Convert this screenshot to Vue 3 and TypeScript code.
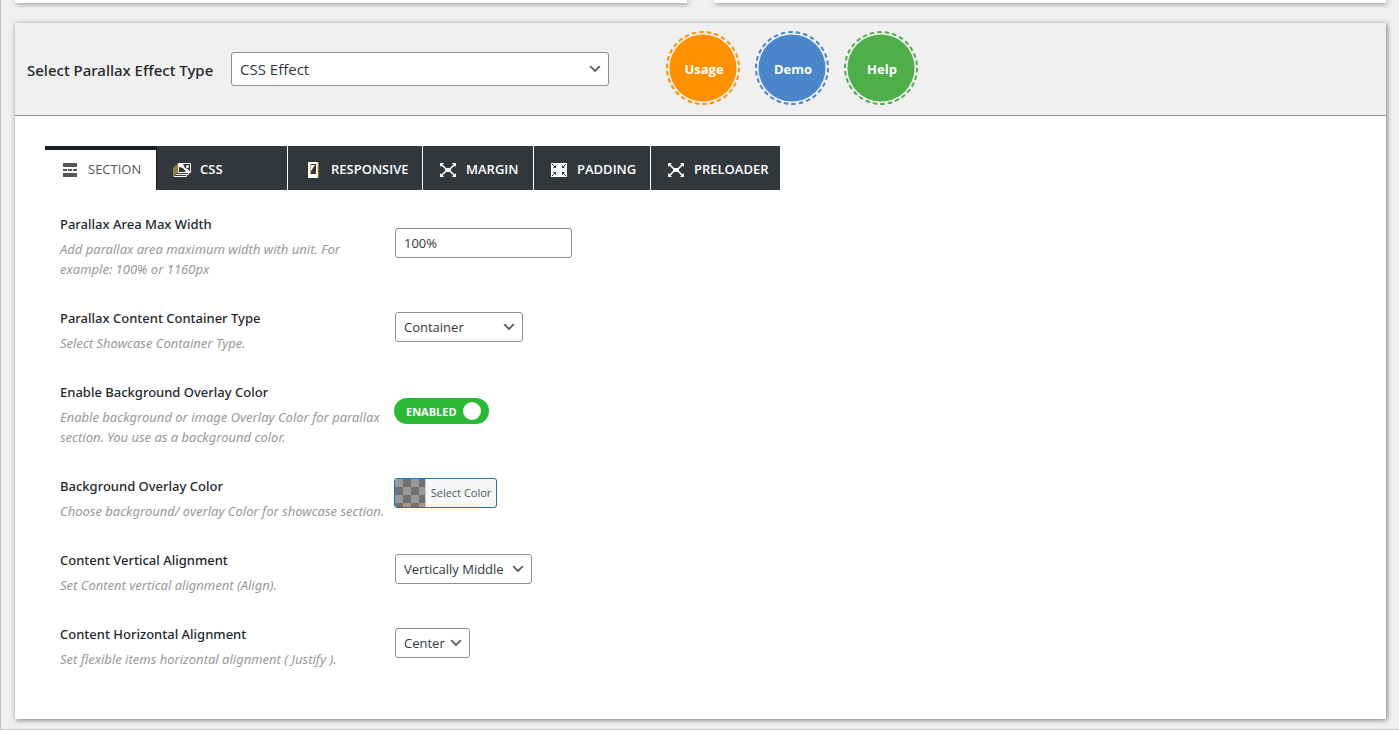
<script setup lang="ts">
import { ref } from 'vue'

interface Field {
  id: string
  title: string
  hint: string
  kind: 'text' | 'select' | 'toggle' | 'color'
  options?: string[]
  size?: string
}

const tabs = [
  { name: 'SECTION', icon: 'section' },
  { name: 'CSS', icon: 'images' },
  { name: 'RESPONSIVE', icon: 'phone' },
  { name: 'MARGIN', icon: 'expand' },
  { name: 'PADDING', icon: 'contract' },
  { name: 'PRELOADER', icon: 'expand' },
]
const active = ref('SECTION')
const effects = ['CSS Effect', 'Image Effect', 'Video Effect']
const effect = ref('CSS Effect')
const badges = [
  { text: 'Usage', tone: 'orange' },
  { text: 'Demo', tone: 'blue' },
  { text: 'Help', tone: 'green' },
]

const fields: Field[] = [
  { id: 'max-width', title: 'Parallax Area Max Width', hint: 'Add parallax area maximum width with unit. For example: 100% or 1160px', kind: 'text' },
  { id: 'container', title: 'Parallax Content Container Type', hint: 'Select Showcase Container Type.', kind: 'select', options: ['Container', 'Full Width'], size: 'medium' },
  { id: 'overlay', title: 'Enable Background Overlay Color', hint: 'Enable background or image Overlay Color for parallax section. You use as a background color.', kind: 'toggle' },
  { id: 'color', title: 'Background Overlay Color', hint: 'Choose background/ overlay Color for showcase section.', kind: 'color' },
  { id: 'vertical', title: 'Content Vertical Alignment', hint: 'Set Content vertical alignment (Align).', kind: 'select', options: ['Vertically Middle', 'Vertically Top'], size: 'large' },
  { id: 'horizontal', title: 'Content Horizontal Alignment', hint: 'Set flexible items horizontal alignment ( Justify ).', kind: 'select', options: ['Center', 'Left', 'Right'], size: 'small' },
]
const values = ref<Record<string, string>>({
  'max-width': '100%',
  container: 'Container',
  vertical: 'Vertically Middle',
  horizontal: 'Center',
})
const overlay = ref(true)
</script>

<template>
  <main class="page">
    <div class="previous">
      <div class="previous-card"></div>
      <div class="previous-card"></div>
    </div>

    <section class="card">
      <header class="head">
        <label class="head-label" for="effect">Select Parallax Effect Type</label>
        <span class="pick pick-wide">
          <select id="effect" v-model="effect">
            <option v-for="e in effects" :key="e">{{ e }}</option>
          </select>
          <svg class="chevron" viewBox="0 0 20 20"><path d="M5 6l5 5 5-5 2 1-7 7-7-7 2-1z" fill="#555" /></svg>
        </span>
        <nav class="badges">
          <a v-for="b in badges" :key="b.text" href="#" class="badge" :class="b.tone">
            <svg class="ring" viewBox="0 0 74 74">
              <circle cx="37" cy="37" r="36" fill="none" stroke="currentColor" stroke-width="2" pathLength="300" stroke-dasharray="6 4" />
              <circle cx="37" cy="37" r="33.500" fill="currentColor" />
            </svg>
            <span class="badge-text">{{ b.text }}</span>
          </a>
        </nav>
      </header>

      <div class="body">
        <div class="tabs" role="tablist">
          <button
            v-for="t in tabs"
            :key="t.name"
            type="button"
            role="tab"
            class="tab"
            :class="[{ active: active === t.name }, 'tab-' + t.name.toLowerCase()]"
            :aria-selected="active === t.name"
            @click="active = t.name"
          >
            <svg v-if="t.icon === 'section'" class="icon" viewBox="0 0 20 20" fill="currentColor">
              <path d="M3 3h14v4H3zM3 9h4v2H3zM8 9h4v2H8zM13 9h4v2h-4zM3 13h14v4H3z" />
            </svg>
            <svg v-else-if="t.icon === 'images'" class="icon" viewBox="0 0 20 20">
              <path d="M6.500 3.500h12v9h-12z" fill="none" stroke="#fff" />
              <path d="M4 14.500h12.500v-2M2 16.500h12.500v-2" fill="none" stroke="#fff" />
              <path d="M6 3v10M4 5v10M2 7v10" fill="none" stroke="#efc35c" />
              <path d="M7 4h4l2 4 3 1 2 3h-4l-3-4-4-1z" fill="#fff" />
              <circle cx="15.500" cy="6.500" r="1.500" fill="#fff" />
            </svg>
            <svg v-else-if="t.icon === 'phone'" class="icon" viewBox="0 0 20 20">
              <path fill="#fff" fill-rule="evenodd" d="M5 2h10v16H5zM7 4v10h6V4z" />
              <path fill="#fff" d="M8 5h4l-4 6z" />
              <path stroke="#e3b64c" d="M15 2v16M7.500 4v10" />
            </svg>
            <svg v-else-if="t.icon === 'expand'" class="icon" viewBox="0 0 20 20">
              <path fill="#fff" d="M7 8h6v4H7z" />
              <path fill="#fff" d="M2 3h4L2 7zM18 3h-4l4 4zM2 17h4l-4-4zM18 17h-4l4-4z" />
              <path stroke="#fff" stroke-width="1.600" d="M3 4l5 5M17 4l-5 5M3 16l5-5M17 16l-5-5" />
            </svg>
            <svg v-else class="icon" viewBox="0 0 20 20">
              <path fill="#fff" d="M2 3h16v14H2z" />
              <path fill="#32373c" d="M7 8V5L4 8zM13 8V5l3 3zM7 12v3l-3-3zM13 12v3l3-3z" />
              <path stroke="#32373c" d="M3 4l3 3M17 4l-3 3M3 16l3-3M17 16l-3-3" />
            </svg>
            <span class="tab-text">{{ t.name }}</span>
          </button>
        </div>

        <form class="fields" @submit.prevent>
          <div v-for="f in fields" :key="f.id" class="field">
            <div class="about">
              <label class="title" :for="f.id">{{ f.title }}</label>
              <p class="hint">{{ f.hint }}</p>
            </div>
            <div class="control">
              <input v-if="f.kind === 'text'" :id="f.id" v-model="values[f.id]" class="text" type="text" />
              <span v-else-if="f.kind === 'select'" class="pick" :class="'pick-' + f.size">
                <select :id="f.id" v-model="values[f.id]">
                  <option v-for="o in f.options" :key="o">{{ o }}</option>
                </select>
                <svg class="chevron" viewBox="0 0 20 20"><path d="M5 6l5 5 5-5 2 1-7 7-7-7 2-1z" fill="#555" /></svg>
              </span>
              <label v-else-if="f.kind === 'toggle'" class="toggle" :class="{ off: !overlay }">
                <input :id="f.id" v-model="overlay" type="checkbox" />
                <span>{{ overlay ? 'ENABLED' : 'DISABLED' }}</span>
                <i class="knob"></i>
              </label>
              <button v-else :id="f.id" type="button" class="color">
                <span class="swatch"></span>
                <span class="color-text">Select Color</span>
              </button>
            </div>
          </div>
        </form>
      </div>
    </section>
  </main>
</template>

<style>
body {
  margin: 0;
  background: #f0f0f1;
}
</style>

<style scoped>
* {
  box-sizing: border-box;
}
.page {
  min-height: 100vh;
  padding: 0 13px 10px 14px;
  border-left: 1px solid #c3c4c7;
  border-bottom: 1px solid #c3c4c7;
  background: #f0f0f0;
  color: #23282d;
  font-family: "Segoe UI", "Open Sans", "Noto Sans", sans-serif;
  font-size: 13px;
}
.previous {
  display: grid;
  grid-template-columns: 1fr 1fr;
  gap: 27px;
  margin-bottom: 20px;
}
.previous-card {
  height: 3px;
  background: #fff;
  box-shadow: 1px 1px 5px #777;
}
.card {
  background: #fff;
  box-shadow: 1px 1px 5px #777;
}
.head {
  display: flex;
  align-items: center;
  height: 93px;
  padding: 0 12px;
  border-bottom: 1px solid #8c8f94;
  background: #f0f0f0;
}
.head-label {
  width: 204px;
  padding-top: 2px;
  font-family: "Segoe UI", "Noto Sans", sans-serif;
  font-size: 15px;
  font-weight: 500;
  white-space: nowrap;
}
.pick {
  position: relative;
  display: block;
  height: 30px;
}
.pick-wide {
  width: 378px;
  height: 34px;
}
.pick-medium { width: 128px; }
.pick-large { width: 137px; }
.pick-small { width: 75px; }
select,
.text {
  width: 100%;
  height: 100%;
  margin: 0;
  padding: 0 8px;
  appearance: none;
  border: 1px solid #8c8f94;
  border-radius: 3px;
  background: #fff;
  color: #32373c;
  font-family: inherit;
  font-size: 13px;
}
.pick-wide select {
  font-size: 15px;
}
.text {
  display: block;
  width: 177px;
  height: 30px;
}
.chevron {
  position: absolute;
  top: 50%;
  right: 6px;
  width: 16px;
  height: 16px;
  margin-top: -8px;
  pointer-events: none;
}
.badges {
  display: flex;
  gap: 15px;
  margin: 0 0 2px 57px;
}
.badge {
  position: relative;
  display: flex;
  align-items: center;
  justify-content: center;
  width: 74px;
  height: 74px;
  text-decoration: none;
}
.orange { color: #ff9100; }
.blue { color: #4a86c9; }
.green { color: #4eae49; }
.ring {
  position: absolute;
  inset: 0;
}
.badge-text {
  position: relative;
  padding: 2px 0 0 2px;
  color: #fff;
  font-weight: 700;
}
.body {
  padding: 30px 30px 21px;
}
.tabs {
  display: flex;
}
.tab {
  display: flex;
  align-items: center;
  height: 44px;
  padding: 3px 14px 0 15px;
  border: 0;
  border-right: 1px solid #fff;
  background: #32373c;
  color: #fff;
  font-family: inherit;
  font-size: 13px;
  font-weight: 600;
  white-space: nowrap;
}
.tab:last-child {
  border-right: 0;
}
.tab.active {
  padding-top: 0;
  border-top: 4px solid #191e23;
  border-right-color: #191e23;
  background: #fff;
  color: #555;
  font-weight: 400;
}
.tab-text {
  padding-bottom: 2px;
}
.tab-section { width: 112px; }
.tab-css { width: 131px; }
.tab-responsive { width: 135px; }
.tab-margin { width: 111px; }
.tab-padding { width: 117px; }
.tab-preloader { width: 129px; }
.icon {
  flex: none;
  width: 20px;
  height: 20px;
  margin-right: 8px;
}
.fields {
  padding: 24px 15px 0;
}
.field {
  display: flex;
  align-items: center;
  padding-bottom: 29px;
}
.about {
  width: 334px;
  padding-right: 8px;
}
.title {
  display: block;
  font-family: "Segoe UI", "Noto Sans", sans-serif;
  line-height: 20px;
  font-weight: 500;
}
.hint {
  margin: 5px 0 0;
  color: #999;
  font-family: "Segoe UI", "Noto Sans", sans-serif;
  font-size: 13px;
  font-style: italic;
  line-height: 20px;
}
.control {
  padding: 0 0 7px 1px;
}
.toggle {
  position: relative;
  display: flex;
  align-items: center;
  justify-content: space-between;
  width: 95px;
  height: 26px;
  margin-left: -1px;
  padding: 0 8px 0 12px;
  border-radius: 13px;
  background: #2ab934;
  color: #fff;
  font-size: 11px;
  font-weight: 700;
}
.toggle.off {
  background: #999;
}
.toggle input {
  position: absolute;
  inset: 0;
  margin: 0;
  opacity: 0;
}
.knob {
  width: 18px;
  height: 18px;
  border-radius: 50%;
  background: #fff;
}
.color {
  display: flex;
  width: 103px;
  height: 30px;
  margin: 0 0 4px -1px;
  padding: 0;
  overflow: hidden;
  border: 1px solid #2271b1;
  border-radius: 3px;
  background: #f6f7f7;
  color: #50575e;
  font-family: inherit;
  font-size: 11px;
  line-height: 28px;
  white-space: nowrap;
}
.swatch {
  width: 31px;
  border-right: 1px solid #ccc;
  background: repeating-conic-gradient(#707070 0 25%, #999 0 50%) 0 0 / 16px 16px;
}
.color-text {
  flex: 1;
}
</style>
